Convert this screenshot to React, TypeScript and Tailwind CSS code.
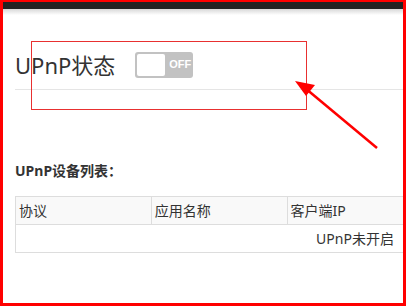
export default function App() {
  const cols = ["协议", "应用名称", "客户端IP", "", ""];

  return (
    <div
      className="relative w-[406px] h-[306px] overflow-hidden bg-white border-x-[3px] border-b-[3px] border-t-[2px] border-[#ff0000]"
      style={{ fontFamily: '"Noto Sans", "Noto Sans CJK SC", sans-serif' }}
    >
      {/* top bar */}
      <div className="h-[7px] bg-[#222222]" />
      <div className="h-[6px] bg-gradient-to-b from-[#d8d8d8] to-white" />

      <div className="pl-3 w-[700px]">
        {/* title row */}
        <div className="flex items-center h-[50px] mt-[25px] w-[388px] border-b border-[#e5e5e5]">
          <span className="text-[22px] leading-none text-[#333] font-normal">UPnP状态</span>
          <div className="ml-[20px] flex items-center w-[58px] h-[26px] rounded-[3px] bg-[#c2c2c2] p-[2px]">
            <div className="w-[28px] h-[22px] rounded-[2px] bg-white" />
            <span className="ml-[4px] text-[11px] font-bold text-white" style={{ fontFamily: '"Liberation Sans", sans-serif' }}>OFF</span>
          </div>
        </div>

        {/* list title */}
        <div className="mt-[74px] text-[14px] font-bold text-[#333] leading-none">UPnP设备列表：</div>

        {/* table */}
        <table className="mt-[18px] w-[680px] border-collapse table-fixed text-[14px] text-[#333]">
          <thead>
            <tr className="bg-[#f9f9f9] h-[28px]">
              {cols.map((c, i) => (
                <th key={i} className="border border-[#dddddd] text-left font-normal px-[3px] leading-none">
                  {c}
                </th>
              ))}
            </tr>
          </thead>
          <tbody>
            <tr className="h-[28px]">
              <td colSpan={5} className="border border-[#dddddd] text-center leading-none">
                UPnP未开启
              </td>
            </tr>
          </tbody>
        </table>
      </div>

      {/* annotation */}
      <div className="absolute left-[28px] top-[39px] w-[276px] h-[69px] border border-[#e83030]" />
      <svg className="absolute left-0 top-0" width="406" height="306">
        <line x1="374" y1="146" x2="302" y2="86" stroke="#ff0000" strokeWidth="2.5" />
        <polygon points="292,79 312,83 303,94" fill="#ff0000" />
      </svg>
    </div>
  );
}
